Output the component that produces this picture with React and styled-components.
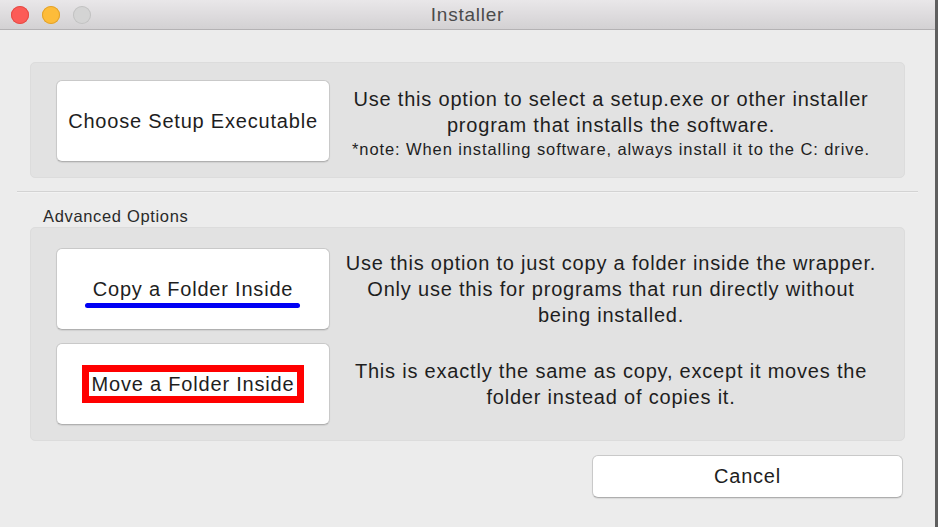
import React from 'react';
import styled, { createGlobalStyle } from 'styled-components';

const Global = createGlobalStyle`
  html, body { margin: 0; padding: 0; background: #5f5f5f; }
  body { font-family: "Liberation Sans", Arial, sans-serif; -webkit-font-smoothing: antialiased; }
  #root { width: 938px; height: 527px; overflow: hidden; }
`;

const Window = styled.div`
  width: 935px;
  height: 527px;
  background: #ececec;
  display: flex;
  flex-direction: column;
`;

const TitleBar = styled.div`
  flex: none;
  height: 29px;
  border-bottom: 1px solid #b4b2b4;
  background: linear-gradient(#e9e7e9, #d3d1d3);
  display: grid;
  grid-template-columns: 1fr auto 1fr;
  align-items: center;
`;

const Lights = styled.div`
  display: flex;
  gap: 13px;
  padding-left: 11px;
`;

const Light = styled.span`
  width: 18px;
  height: 18px;
  border-radius: 50%;
  background: ${p => p.$bg};
  box-shadow: inset 0 0 0 1px ${p => p.$edge};
`;

const Title = styled.div`
  font-size: 19px;
  color: #4b4b4b;
  letter-spacing: 0.04em;
`;

const Content = styled.div`
  display: flex;
  flex-direction: column;
  padding: 32px 30px 0;
`;

const Panel = styled.div`
  background: #e2e2e2;
  border: 1px solid #dcdcdc;
  border-radius: 5px;
  padding: ${p => p.$pad};
  display: flex;
  flex-direction: column;
  gap: 13px;
`;

const Row = styled.div`
  display: grid;
  grid-template-columns: 274px 1fr;
  align-items: center;
  padding: 0 12px 0 25px;
`;

const OptionButton = styled.button`
  height: 82px;
  box-sizing: border-box;
  background: #fff;
  border: 1px solid #c9c9c9;
  border-bottom-color: #b0b0b0;
  border-radius: 6px;
  box-shadow: 0 1px 1px rgba(0, 0, 0, 0.08);
  font-family: inherit;
  font-size: 20px;
  letter-spacing: 0.04em;
  color: #1e1e1e;
  padding: 0;
  display: flex;
  align-items: center;
  justify-content: center;
  white-space: nowrap;
  overflow: hidden;
`;

const Underlined = styled.span`
  position: relative;
  &::after {
    content: "";
    position: absolute;
    left: -8px;
    right: -7px;
    bottom: -7px;
    height: 5px;
    border-radius: 3px;
    background: #0000f4;
  }
`;

const Boxed = styled.span`
  border: 7px solid #ff0000;
  padding: 0 3px;
  line-height: 24px;
  background: #fff;
`;

const Desc = styled.div`
  text-align: center;
  color: #1e1e1e;
  font-size: 20px;
  letter-spacing: 0.04em;
  line-height: 26px;
  padding-top: ${p => p.$shift || 0}px;
`;

const Line = styled.div`
  white-space: nowrap;
`;

const Note = styled.div`
  white-space: nowrap;
  font-size: 16.5px;
  line-height: 22px;
  letter-spacing: 0.9px;
`;

const Separator = styled.div`
  height: 1px;
  background: #d3d3d3;
  margin: 13px -13px 0;
  border-bottom: 1px solid #f2f2f2;
`;

const SectionLabel = styled.div`
  font-size: 16.5px;
  letter-spacing: 0.04em;
  color: #2a2a2a;
  line-height: 20px;
  margin: 13px 0 1px 13px;
`;

const Footer = styled.div`
  display: flex;
  justify-content: flex-end;
  padding: 14px 2px 0 0;
`;

const CancelButton = styled.button`
  width: 311px;
  height: 43px;
  box-sizing: border-box;
  background: #fff;
  border: 1px solid #c9c9c9;
  border-bottom-color: #aeaeae;
  border-radius: 6px;
  box-shadow: 0 1px 1px rgba(0, 0, 0, 0.08);
  font-family: inherit;
  font-size: 20px;
  letter-spacing: 0.04em;
  color: #1e1e1e;
`;

export default function App() {
  return (
    <>
      <Global />
      <Window>
        <TitleBar>
          <Lights>
            <Light $bg="#fc5b57" $edge="#e24b45" />
            <Light $bg="#fdbc3a" $edge="#e0a12c" />
            <Light $bg="#d4d4d4" $edge="#c2c2c2" />
          </Lights>
          <Title>Installer</Title>
          <div />
        </TitleBar>
        <Content>
          <Panel $pad="17px 0 15px">
            <Row>
              <OptionButton>Choose Setup Executable</OptionButton>
              <Desc $shift={4}>
                <Line>Use this option to select a setup.exe or other installer</Line>
                <Line>program that installs the software.</Line>
                <Note>*note: When installing software, always install it to the C: drive.</Note>
              </Desc>
            </Row>
          </Panel>
          <Separator />
          <SectionLabel>Advanced Options</SectionLabel>
          <Panel $pad="20px 0 15px">
            <Row>
              <OptionButton>
                <Underlined>Copy a Folder Inside</Underlined>
              </OptionButton>
              <Desc>
                <Line>Use this option to just copy a folder inside the wrapper.</Line>
                <Line>Only use this for programs that run directly without</Line>
                <Line>being installed.</Line>
              </Desc>
            </Row>
            <Row>
              <OptionButton>
                <Boxed>Move a Folder Inside</Boxed>
              </OptionButton>
              <Desc>
                <Line>This is exactly the same as copy, except it moves the</Line>
                <Line>folder instead of copies it.</Line>
              </Desc>
            </Row>
          </Panel>
          <Footer>
            <CancelButton>Cancel</CancelButton>
          </Footer>
        </Content>
      </Window>
    </>
  );
}
